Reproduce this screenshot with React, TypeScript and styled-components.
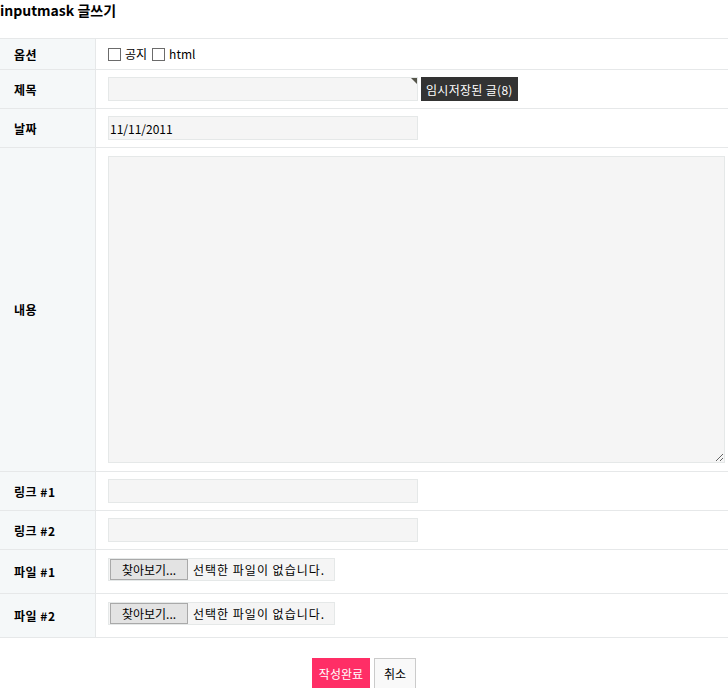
import React from "react";
import styled, { createGlobalStyle } from "styled-components";

const GlobalStyle = createGlobalStyle`
  html, body {
    margin: 0;
    padding: 0;
    background: #fff;
    color: #000;
    font-family: "Noto Sans CJK KR", "Liberation Sans", sans-serif;
    font-size: 12px;
  }
  * { box-sizing: border-box; }
`;

const Page = styled.div`
  width: 728px;
`;

const Title = styled.h2`
  margin: 0;
  height: 38px;
  padding-top: 1px;
  font-size: 14px;
  font-weight: bold;
  line-height: 18px;
`;

const Table = styled.div`
  border-top: 1px solid #e6e8e9;
`;

const Row = styled.div`
  display: grid;
  grid-template-columns: 96px 1fr;
  border-bottom: 1px solid #e6e8e9;
`;

const Label = styled.div`
  display: flex;
  align-items: center;
  padding-left: 14px;
  background: #f5f8f9;
  border-right: 1px solid #e6e8e9;
  font-weight: bold;
  font-size: 12px;
  letter-spacing: 0.5px;
`;

const Value = styled.div<{ $pad?: string }>`
  display: flex;
  align-items: center;
  padding: ${(p) => p.$pad || "7px 12px"};
`;

const Check = styled.span`
  display: inline-block;
  width: 13px;
  height: 13px;
  border: 1px solid #6b6b6b;
  background: #fff;
  margin-right: 4px;
`;

const CheckLabel = styled.label`
  display: inline-flex;
  align-items: center;
  margin-right: 5px;
  line-height: 16px;
`;

const InputWrap = styled.div`
  position: relative;
  width: 310px;
  &::after {
    content: "";
    position: absolute;
    top: 1px;
    right: 1px;
    border-style: solid;
    border-width: 0 6px 6px 0;
    border-color: transparent #55554a transparent transparent;
  }
`;

const TextInput = styled.input`
  display: block;
  width: 310px;
  height: 24px;
  margin: 0;
  padding: 0 1px;
  background: #f5f5f5;
  border: 1px solid #e5e8e8;
  font-family: inherit;
  font-size: 12px;
  color: #000;
  outline: none;
`;

const TempButton = styled.button`
  height: 24px;
  margin-left: 3px;
  padding: 0 5px;
  background: #333;
  color: #fff;
  border: none;
  font-family: inherit;
  font-size: 12px;
  letter-spacing: 0.3px;
`;

const TextArea = styled.textarea`
  display: block;
  width: 617px;
  height: 307px;
  margin: 0;
  background: #f5f5f5;
  border: 1px solid #e5e8e8;
  font-family: inherit;
  font-size: 12px;
  outline: none;
`;

const FileBox = styled.div`
  display: inline-flex;
  align-items: center;
  height: 23px;
  padding: 1px 9px 1px 1px;
  background: #f5f5f5;
  border: 1px solid #e5e8e8;
`;

const FileButton = styled.span`
  display: inline-flex;
  align-items: center;
  justify-content: center;
  width: 78px;
  height: 21px;
  background: #e3e3e3;
  border: 1px solid #a9a9a9;
  font-size: 12px;
`;

const FileText = styled.span`
  margin-left: 5px;
  font-size: 12px;
  letter-spacing: 1px;
`;

const Footer = styled.div`
  display: flex;
  justify-content: center;
  gap: 4px;
  padding-top: 20px;
`;

const Button = styled.button<{ $primary?: boolean }>`
  height: 31px;
  padding: 0 ${(p) => (p.$primary ? "7px" : "9px")};
  font-family: inherit;
  font-size: 12px;
  background: ${(p) => (p.$primary ? "#ff2e66" : "#f9f9f9")};
  color: ${(p) => (p.$primary ? "#fff" : "#000")};
  border: ${(p) => (p.$primary ? "none" : "1px solid #cbcbcb")};
`;

const FileField = () => (
  <FileBox>
    <FileButton>찾아보기...</FileButton>
    <FileText>선택한 파일이 없습니다.</FileText>
  </FileBox>
);

export default function App() {
  return (
    <Page>
      <GlobalStyle />
      <Title>inputmask 글쓰기</Title>
      <Table>
        <Row>
          <Label>옵션</Label>
          <Value $pad="7px 12px 7px">
            <CheckLabel>
              <Check />
              공지
            </CheckLabel>
            <CheckLabel>
              <Check />
              html
            </CheckLabel>
          </Value>
        </Row>
        <Row>
          <Label>제목</Label>
          <Value>
            <InputWrap>
              <TextInput />
            </InputWrap>
            <TempButton>임시저장된 글(8)</TempButton>
          </Value>
        </Row>
        <Row>
          <Label>날짜</Label>
          <Value>
            <TextInput defaultValue="11/11/2011" />
          </Value>
        </Row>
        <Row>
          <Label>내용</Label>
          <Value $pad="8px 12px 8px">
            <TextArea />
          </Value>
        </Row>
        <Row>
          <Label>링크 #1</Label>
          <Value>
            <TextInput />
          </Value>
        </Row>
        <Row>
          <Label>링크 #2</Label>
          <Value>
            <TextInput />
          </Value>
        </Row>
        <Row>
          <Label>파일 #1</Label>
          <Value $pad="8px 12px 12px">
            <FileField />
          </Value>
        </Row>
        <Row>
          <Label>파일 #2</Label>
          <Value $pad="8px 12px 12px">
            <FileField />
          </Value>
        </Row>
      </Table>
      <Footer>
        <Button $primary>작성완료</Button>
        <Button>취소</Button>
      </Footer>
    </Page>
  );
}
